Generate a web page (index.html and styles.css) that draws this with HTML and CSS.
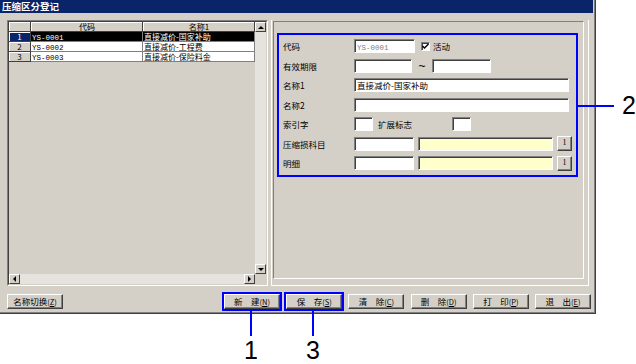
FILE: index.html
```html
<!DOCTYPE html>
<html lang="zh">
<head>
    <meta charset="UTF-8">
    <title>压缩区分登记</title>
    <link rel="stylesheet" href="styles.css">
</head>
<body>
    <div class="window">
        <div class="titlebar">压缩区分登记</div>

        <div class="main">
            <div class="grid">
                <div class="grid-inner">
                    <div class="grid-body">
                        <div class="table">
                            <div class="row head">
                                <span class="num"></span>
                                <span class="cell">代码</span>
                                <span class="cell">名称1</span>
                            </div>
                            <div class="row selected">
                                <span class="num">1</span>
                                <span class="cell"><span class="code">YS-0001</span></span>
                                <span class="cell">直接减价-国家补助</span>
                            </div>
                            <div class="row">
                                <span class="num">2</span>
                                <span class="cell"><span class="code">YS-0002</span></span>
                                <span class="cell">直接减价-工程费</span>
                            </div>
                            <div class="row">
                                <span class="num">3</span>
                                <span class="cell"><span class="code">YS-0003</span></span>
                                <span class="cell">直接减价-保险料金</span>
                            </div>
                        </div>
                        <div class="vscroll">
                            <span class="arrow up"></span>
                            <span class="track"></span>
                            <span class="arrow down"></span>
                        </div>
                    </div>
                    <div class="grid-foot">
                        <div class="hscroll">
                            <span class="arrow left"></span>
                            <span class="track"></span>
                            <span class="arrow right"></span>
                        </div>
                        <span class="corner"></span>
                    </div>
                </div>
            </div>

            <div class="detail">
                <div class="page">
                    <div class="form">
                        <div class="frow">
                            <span class="label">代码</span>
                            <span class="field w61 readonly"><span class="code">YS-0001</span></span>
                            <span class="check">
                                <svg width="7" height="7" viewBox="0 0 7 7"><path d="M0.5 3 L2.5 5 L6.5 1" fill="none" stroke="#000" stroke-width="1.4"/></svg>
                            </span>
                            <span class="check-label">活动</span>
                        </div>
                        <div class="frow">
                            <span class="label">有效期限</span>
                            <span class="field w58"></span>
                            <span class="tilde">~</span>
                            <span class="field w59"></span>
                        </div>
                        <div class="frow">
                            <span class="label">名称1</span>
                            <span class="field w215">直接减价-国家补助</span>
                        </div>
                        <div class="frow">
                            <span class="label">名称2</span>
                            <span class="field w215"></span>
                        </div>
                        <div class="frow">
                            <span class="label">索引字</span>
                            <span class="field w19"></span>
                            <span class="label-inline">扩展标志</span>
                            <span class="field w19"></span>
                        </div>
                        <div class="frow">
                            <span class="label">压缩损科目</span>
                            <span class="field w60"></span>
                            <span class="field w135 lookup"></span>
                            <span class="mini-btn">1</span>
                        </div>
                        <div class="frow">
                            <span class="label">明细</span>
                            <span class="field w60"></span>
                            <span class="field w135 lookup"></span>
                            <span class="mini-btn">1</span>
                        </div>
                    </div>
                </div>
            </div>
        </div>

        <div class="footer">
            <span class="btn">名称切换<span class="key">(<u>Z</u>)</span></span>
            <div class="actions">
                <span class="btn marked">新　建<span class="key">(<u>N</u>)</span></span>
                <span class="btn marked">保　存<span class="key">(<u>S</u>)</span></span>
                <span class="btn">清　除<span class="key">(<u>C</u>)</span></span>
                <span class="btn">删　除<span class="key">(<u>D</u>)</span></span>
                <span class="btn">打　印<span class="key">(<u>P</u>)</span></span>
                <span class="btn">退　出<span class="key">(<u>E</u>)</span></span>
            </div>
        </div>
    </div>

    <!-- annotations -->
    <span class="callout-line h2"></span>
    <span class="callout-num n2">2</span>
    <span class="callout-line v1"></span>
    <span class="callout-num n1">1</span>
    <span class="callout-line v3"></span>
    <span class="callout-num n3">3</span>
</body>
</html>
```

FILE: styles.css
```css
body {
    margin: 0;
    background: #fff;
    font-family: "Noto Sans CJK SC", sans-serif;
    font-size: 8.5px;
    color: #000;
    position: relative;
    width: 636px;
    height: 364px;
    overflow: hidden;
}

.window {
    width: 596px;
    height: 314px;
    box-sizing: border-box;
    background: #d4d0c8;
    border-right: 1px solid #404040;
    border-bottom: 1px solid #404040;
    box-shadow: inset -1px -1px #808080;
    display: flex;
    flex-direction: column;
}

.titlebar {
    height: 13px;
    margin-right: 2px;
    padding-left: 2px;
    background: #0a246a;
    color: #fff;
    font-weight: bold;
    font-size: 9.5px;
    line-height: 13px;
}

.main {
    display: flex;
    gap: 3px;
    padding: 7px 0 0 7px;
    height: 266px;
}

/* grid */
.grid {
    width: 261px;
    box-sizing: border-box;
    border: 1px solid;
    border-color: #808080 #fff #fff #808080;
}

.grid-inner {
    height: 100%;
    box-sizing: border-box;
    border: 1px solid;
    border-color: #404040 #d4d0c8 #d4d0c8 #404040;
    display: flex;
    flex-direction: column;
}

.grid-body {
    flex: 1;
    display: flex;
}

.table {
    width: 246px;
    font-size: 8px;
}

.row {
    display: flex;
    height: 10px;
    line-height: 10px;
    background: #fff;
}

.row.head {
    background: #d4d0c8;
}

.num {
    width: 22px;
    flex: none;
    box-sizing: border-box;
    text-align: center;
    background: #d4d0c8;
    border-right: 1px solid #404040;
    border-bottom: 1px solid #404040;
    box-shadow: inset 1px 1px #fff;
}

.cell {
    width: 112px;
    flex: none;
    box-sizing: border-box;
    padding-left: 1px;
    border-right: 1px solid #808080;
    border-bottom: 1px solid #808080;
    white-space: nowrap;
}

.head .cell {
    text-align: center;
    border-right-color: #404040;
    border-bottom-color: #404040;
    box-shadow: inset 1px 1px #fff;
}

.selected .cell {
    background: #000;
    color: #fff;
}

.selected .num {
    background: #0a246a;
    color: #fff;
}

.code {
    font-family: "Liberation Mono", monospace;
    font-size: 7.5px;
}

.vscroll {
    width: 11px;
    display: flex;
    flex-direction: column;
}

.hscroll {
    width: 246px;
    display: flex;
}

.track {
    flex: 1;
    background: #e6e3de;
}

.grid-foot {
    display: flex;
    height: 10px;
}

.corner {
    flex: 1;
    background: #d4d0c8;
}

.arrow {
    flex: none;
    width: 11px;
    height: 10px;
    box-sizing: border-box;
    background: #d4d0c8;
    border: 1px solid;
    border-color: #fff #404040 #404040 #fff;
    display: flex;
    align-items: center;
    justify-content: center;
}

.arrow::after {
    content: "";
    border: 3px solid transparent;
}

.arrow.up::after { border-bottom-color: #000; border-top-width: 0; }
.arrow.down::after { border-top-color: #000; border-bottom-width: 0; }
.arrow.left::after { border-right-color: #000; border-left-width: 0; }
.arrow.right::after { border-left-color: #000; border-right-width: 0; }

/* detail panel */
.detail {
    width: 318px;
    box-sizing: border-box;
    border-left: 1px solid #fff;
    border-right: 1px solid #fff;
    border-bottom: 1px solid #fff;
    padding: 1px 4px 6px 1px;
}

.page {
    height: 100%;
    box-sizing: border-box;
    border: 1px solid;
    border-color: #808080 #fff #fff #808080;
    padding: 11px 0 0 3px;
}

.form {
    width: 301px;
    height: 144px;
    box-sizing: border-box;
    border: 2px solid #0000ff;
    padding: 4px 0 0 4px;
    display: flex;
    flex-direction: column;
    gap: 5.5px;
}

.frow {
    display: flex;
    align-items: center;
    height: 14px;
}

.label {
    width: 71px;
    flex: none;
}

.field {
    height: 14px;
    box-sizing: border-box;
    flex: none;
    background: #fff;
    border: 1px solid;
    border-color: #808080 #fff #fff #808080;
    box-shadow: inset 1px 1px #404040;
    padding-left: 2px;
    line-height: 12px;
    white-space: nowrap;
    overflow: hidden;
}

.field.readonly {
    color: #808080;
}

.field.lookup {
    background: #ffffcc;
    margin-left: 4px;
}

.w19 { width: 19px; }
.w58 { width: 58px; }
.w59 { width: 59px; }
.w60 { width: 60px; }
.w61 { width: 61px; }
.w135 { width: 135px; }
.w215 { width: 215px; }

.check {
    width: 9px;
    height: 9px;
    box-sizing: border-box;
    margin-left: 6px;
    background: #fff;
    border: 1px solid;
    border-color: #808080 #fff #fff #808080;
    box-shadow: inset 1px 1px #404040;
    display: flex;
    align-items: center;
    justify-content: center;
}

.check-label {
    margin-left: 3px;
}

.tilde {
    width: 20px;
    text-align: center;
    font-family: "Liberation Sans", sans-serif;
    font-size: 12px;
    line-height: 14px;
}

.label-inline {
    width: 74px;
    margin-left: 5px;
    flex: none;
}

.mini-btn {
    width: 15px;
    height: 15px;
    box-sizing: border-box;
    margin-left: 4px;
    border: 1px solid;
    border-color: #fff #404040 #404040 #fff;
    box-shadow: inset -1px -1px #808080;
    text-align: center;
    line-height: 12px;
    font-family: "Liberation Serif", serif;
    font-size: 8px;
}

/* footer buttons */
.footer {
    display: flex;
    padding: 8px 4px 0 7px;
}

.actions {
    margin-left: auto;
    display: flex;
    gap: 6.2px;
}

.btn {
    width: 56px;
    height: 15px;
    box-sizing: border-box;
    background: #d4d0c8;
    border: 1px solid;
    border-color: #fff #404040 #404040 #fff;
    box-shadow: inset -1px -1px #808080;
    text-align: center;
    line-height: 12px;
    white-space: nowrap;
}

.btn.marked {
    outline: 2px solid #0000ff;
}

.key {
    font-size: 7.5px;
}

/* annotations */
.callout-line {
    position: absolute;
    background: #0000ff;
}

.callout-line.h2 { left: 578px; top: 105px; width: 36px; height: 2px; }
.callout-line.v1 { left: 250px; top: 311px; width: 2px; height: 25px; }
.callout-line.v3 { left: 312px; top: 311px; width: 2px; height: 25px; }

.callout-num {
    position: absolute;
    font-family: "Liberation Sans", sans-serif;
    font-size: 25px;
    line-height: 1;
    width: 20px;
    text-align: center;
}

.n2 { left: 619px; top: 93px; }
.n1 { left: 241px; top: 338px; }
.n3 { left: 303px; top: 338px; }
```
